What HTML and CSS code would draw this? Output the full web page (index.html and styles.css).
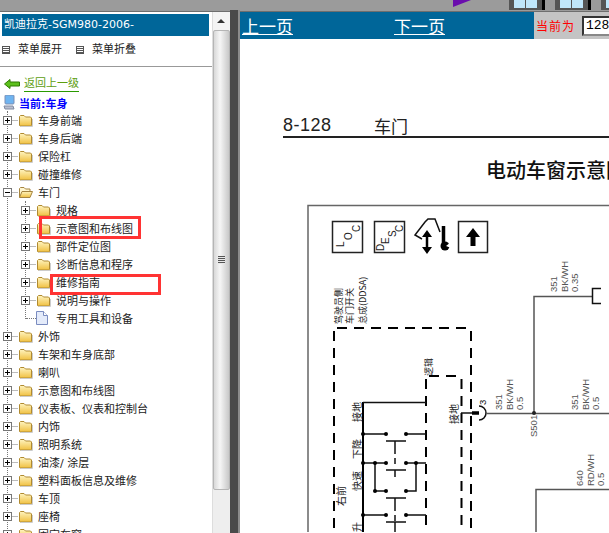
FILE: index.html
```html
<!DOCTYPE html>
<html lang="zh-CN">
<head>
  <meta charset="UTF-8" />
  <title>凯迪拉克-SGM980-2006</title>
  <link rel="stylesheet" href="styles.css">
</head>
<body>

  <!-- shared tree icons -->
  <svg class="defs" width="0" height="0">
    <defs>
      <linearGradient id="folderFill" x1="0" y1="0" x2="0" y2="1">
        <stop offset="0" stop-color="#fff4c0" />
        <stop offset="1" stop-color="#f0c040" />
      </linearGradient>
      <symbol id="plus" viewBox="0 0 15 9">
        <path d="M9.5 4.5H15" stroke="#777" stroke-dasharray="1 1" />
        <rect x=".5" y=".5" width="8" height="8" fill="#fff" stroke="#777" />
        <path d="M2 4.5H7M4.5 2V7" stroke="#000" />
      </symbol>
      <symbol id="minus" viewBox="0 0 15 9">
        <path d="M9.5 4.5H15" stroke="#777" stroke-dasharray="1 1" />
        <rect x=".5" y=".5" width="8" height="8" fill="#fff" stroke="#777" />
        <path d="M2 4.5H7" stroke="#000" />
      </symbol>
      <symbol id="folder" viewBox="0 0 15 13">
        <path d="M1.5 11.5V2.5L2.5 1.5H6L7.5 3H12.5L13.5 4V11.5L13 12H2Z" fill="url(#folderFill)" stroke="#b08a30" />
        <path d="M14.5 5V12.5H2.5" fill="none" stroke="#ccc" />
      </symbol>
      <symbol id="folderOpen" viewBox="0 0 15 13">
        <path d="M1.5 11.5V2.5L2.5 1.5H6L7.5 3H12V5.5" fill="#fff6cf" stroke="#a58440" />
        <path d="M1.5 11.5L4 5.5H14.5L12 11.5Z" fill="url(#folderFill)" stroke="#a58440" />
      </symbol>
    </defs>
  </svg>

  <div class="topbar">
    <svg class="flag" width="18" height="7" viewBox="0 0 18 7"><path d="M0 0H18L0 7Z" fill="#6a0dad" /></svg>
    <div class="tool"><i></i><i></i></div>
    <div class="tool"><i></i><i></i></div>
    <div class="tool"><i></i><i></i></div>
  </div>

  <div class="main">
    <div class="side">
      <div class="side-inner">
        <div class="book-title">凯迪拉克-SGM980-2006-</div>
        <div class="menu-row">
          <span class="menu-item"><span class="menu-icon"></span>菜单展开</span>
          <span class="menu-item"><span class="menu-icon"></span>菜单折叠</span>
        </div>
        <a class="back" href="#">
          <svg width="16" height="10" viewBox="0 0 16 10"><path d="M.5 5L6 .5V3H15.5V7H6V9.5Z" fill="#5cc01c" stroke="#2f7a00" /></svg>
          <span>返回上一级</span>
        </a>
        <div class="current">
          <svg width="12" height="15" viewBox="0 0 12 15">
            <rect x="2" y="0" width="9" height="9" rx="1" fill="#6fb4f0" stroke="#7d8fb5" />
            <path d="M1 11H10L11 14H2Z" fill="#b9bfd0" stroke="#808aa0" />
          </svg>
          <span>当前:车身</span>
        </div>

        <ul class="tree">
          <li class="node"><svg class="box"><use href="#plus" /></svg><svg class="folder"><use href="#folder" /></svg>车身前端</li>
          <li class="node"><svg class="box"><use href="#plus" /></svg><svg class="folder"><use href="#folder" /></svg>车身后端</li>
          <li class="node"><svg class="box"><use href="#plus" /></svg><svg class="folder"><use href="#folder" /></svg>保险杠</li>
          <li class="node"><svg class="box"><use href="#plus" /></svg><svg class="folder"><use href="#folder" /></svg>碰撞维修</li>
          <li class="node"><svg class="box"><use href="#minus" /></svg><svg class="folder"><use href="#folderOpen" /></svg>车门</li>
          <li>
            <ul class="tree sub">
              <li class="node"><svg class="box"><use href="#plus" /></svg><svg class="folder"><use href="#folder" /></svg>规格</li>
              <li class="node"><svg class="box"><use href="#plus" /></svg><svg class="folder"><use href="#folder" /></svg>示意图和布线图</li>
              <li class="node"><svg class="box"><use href="#plus" /></svg><svg class="folder"><use href="#folder" /></svg>部件定位图</li>
              <li class="node"><svg class="box"><use href="#plus" /></svg><svg class="folder"><use href="#folder" /></svg>诊断信息和程序</li>
              <li class="node"><svg class="box"><use href="#plus" /></svg><svg class="folder"><use href="#folder" /></svg>维修指南</li>
              <li class="node"><svg class="box"><use href="#plus" /></svg><svg class="folder"><use href="#folder" /></svg>说明与操作</li>
              <li class="node last">
                <span class="stub"></span>
                <svg class="doc" width="12" height="14" viewBox="0 0 12 14"><path d="M.5.5H7.5L11.5 4.5V13.5H.5Z" fill="#e4ebfa" stroke="#7a8cc0" /><path d="M7.5.5V4.5H11.5" fill="#fff" stroke="#7a8cc0" /></svg>
                专用工具和设备
              </li>
            </ul>
          </li>
          <li class="node"><svg class="box"><use href="#plus" /></svg><svg class="folder"><use href="#folder" /></svg>外饰</li>
          <li class="node"><svg class="box"><use href="#plus" /></svg><svg class="folder"><use href="#folder" /></svg>车架和车身底部</li>
          <li class="node"><svg class="box"><use href="#plus" /></svg><svg class="folder"><use href="#folder" /></svg>喇叭</li>
          <li class="node"><svg class="box"><use href="#plus" /></svg><svg class="folder"><use href="#folder" /></svg>示意图和布线图</li>
          <li class="node"><svg class="box"><use href="#plus" /></svg><svg class="folder"><use href="#folder" /></svg>仪表板、仪表和控制台</li>
          <li class="node"><svg class="box"><use href="#plus" /></svg><svg class="folder"><use href="#folder" /></svg>内饰</li>
          <li class="node"><svg class="box"><use href="#plus" /></svg><svg class="folder"><use href="#folder" /></svg>照明系统</li>
          <li class="node"><svg class="box"><use href="#plus" /></svg><svg class="folder"><use href="#folder" /></svg>油漆/ 涂层</li>
          <li class="node"><svg class="box"><use href="#plus" /></svg><svg class="folder"><use href="#folder" /></svg>塑料面板信息及维修</li>
          <li class="node"><svg class="box"><use href="#plus" /></svg><svg class="folder"><use href="#folder" /></svg>车顶</li>
          <li class="node"><svg class="box"><use href="#plus" /></svg><svg class="folder"><use href="#folder" /></svg>座椅</li>
          <li class="node"><svg class="box"><use href="#plus" /></svg><svg class="folder"><use href="#folder" /></svg>固定车窗</li>
        </ul>

        <!-- red marks drawn over the tree -->
        <div class="mark mark-a"></div>
        <div class="mark mark-b"></div>
      </div>

      <div class="scrollbar">
        <div class="scroll-up"></div>
        <div class="scroll-thumb"><span class="grip"></span></div>
      </div>
    </div>

    <div class="splitter"></div>

    <div class="content">
      <div class="pager">
        <a href="#" class="prev">上一页</a>
        <a href="#" class="next">下一页</a>
        <div class="current-page">
          <span>当前为</span>
          <input type="text" value="128" />
        </div>
      </div>

      <div class="page-head"><span class="page-no">8-128</span><span class="page-name">车门</span></div>
      <div class="page-title">电动车窗示意图</div>

      <svg class="sheet" width="369" height="343" viewBox="240 190 369 343">
        <!-- frame -->
        <path d="M308 533V206.500H609" class="frame" />

        <!-- symbol boxes -->
        <rect x="332.500" y="222.500" width="30" height="31" class="symbol" />
        <rect x="374.500" y="222.500" width="30" height="31" class="symbol" />
        <rect x="458.500" y="222.500" width="29" height="31" class="symbol" />
        <text class="tag" transform="translate(344,248) rotate(-90)">L</text>
        <text class="tag" transform="translate(352,241) rotate(-90)">O</text>
        <text class="tag" transform="translate(360,233) rotate(-90)">C</text>
        <text class="tag" transform="translate(384,252) rotate(-90)">D</text>
        <text class="tag" transform="translate(389,245) rotate(-90)">E</text>
        <text class="tag" transform="translate(396,238) rotate(-90)">S</text>
        <text class="tag" transform="translate(403,233) rotate(-90)">C</text>
        <path d="M422 240L415 236L425 223L428 220H435L440 233" class="wire" />
        <path d="M427 231L422 238H432ZM427 255L422 248H432Z" class="solid" />
        <path d="M427 237V249" stroke="#000" stroke-width="2.500" />
        <path d="M443.500 227V245" stroke="#000" stroke-width="3.500" />
        <circle cx="445" cy="247" r="4.500" class="solid" />
        <path d="M446 247L451 243V249Z" fill="#fff" />
        <path d="M473 229L466 238H470.500V247H475.500V238H480Z" class="solid" />

        <!-- switch assembly labels -->
        <text class="cn" transform="translate(342,325) rotate(-90)">驾驶员侧</text>
        <text class="cn" transform="translate(353,325) rotate(-90)">车门开关</text>
        <text class="cn" transform="translate(366,325) rotate(-90)">总成(DDSA)</text>
        <text class="cn" transform="translate(432,377) rotate(-90)">逻辑</text>
        <text class="cn cn-big" transform="translate(458,425) rotate(-90)">接地</text>
        <text class="cn cn-big" transform="translate(361,423) rotate(-90)">接地</text>
        <text class="cn cn-big" transform="translate(361,460) rotate(-90)">下降</text>
        <text class="cn cn-big" transform="translate(361,492) rotate(-90)">快速</text>
        <text class="cn cn-big" transform="translate(345,507) rotate(-90)">右前</text>
        <text class="cn cn-big" transform="translate(361,533) rotate(-90)">升</text>

        <!-- dashed housings -->
        <path d="M337 329H470M334 332V533M471 332V533" class="dash" />
        <path d="M429 377H462M426 380V533M461.500 380V533" class="dash" />

        <!-- ladder -->
        <path d="M363 403V533" stroke="#000" stroke-width="2" />
        <path d="M363 403.500H426M363 435H386M406 435H426M363 464H386M406 464H426M363 516H386M406 516H426M375 464V492H386M416 464V492H406" class="wire" />
        <path d="M386 442H406M395 442V455M395 459V465M386 471H406M395 471V478M386 499H406M395 499V512M395 516V522M386 523H406M395 523V533" class="wire" />
        <g class="solid">
          <circle cx="363" cy="435" r="2" /><circle cx="386" cy="435" r="2" /><circle cx="406" cy="435" r="2" />
          <circle cx="363" cy="464" r="2" /><circle cx="375" cy="464" r="2" /><circle cx="386" cy="464" r="2" /><circle cx="406" cy="464" r="2" /><circle cx="416" cy="464" r="2" />
          <circle cx="375" cy="492" r="2" /><circle cx="386" cy="492" r="2" /><circle cx="406" cy="492" r="2" />
          <circle cx="363" cy="516" r="2" /><circle cx="386" cy="516" r="2" /><circle cx="406" cy="516" r="2" />
        </g>

        <!-- connector and wires -->
        <path d="M461 414H472" class="wire" />
        <path d="M472 414H479" stroke="#000" stroke-width="3.500" />
        <path d="M479 407A7 7 0 0 1 479 421" class="wire" />
        <path d="M486 414.500H609M534 414V297.500H592" class="line" />
        <path d="M601 289.500H592.500V304.500H601" class="wire" />
        <path d="M536 533V490.500H609" class="line" />
        <circle cx="534" cy="414" r="2" fill="#222" />
        <text class="num num-dark" transform="translate(486,406) rotate(-90)">3</text>

        <text class="num" transform="translate(502,411) rotate(-90)">351</text>
        <text class="num" transform="translate(513,411) rotate(-90)">BK/WH</text>
        <text class="num" transform="translate(523,411) rotate(-90)">0.5</text>
        <text class="num" transform="translate(578,411) rotate(-90)">351</text>
        <text class="num" transform="translate(589,411) rotate(-90)">BK/WH</text>
        <text class="num" transform="translate(599,411) rotate(-90)">0.5</text>
        <text class="num" transform="translate(557,293) rotate(-90)">351</text>
        <text class="num" transform="translate(568,293) rotate(-90)">BK/WH</text>
        <text class="num" transform="translate(578,293) rotate(-90)">0.35</text>
        <text class="num" transform="translate(583,487) rotate(-90)">640</text>
        <text class="num" transform="translate(594,487) rotate(-90)">RD/WH</text>
        <text class="num" transform="translate(604,487) rotate(-90)">0.5</text>
        <text class="num" transform="translate(537,438) rotate(-90)">S501</text>
      </svg>
    </div>
  </div>

</body>
</html>
```

FILE: styles.css
```css
* {
  box-sizing: border-box;
}

html, body {
  margin: 0;
  height: 533px;
  overflow: hidden;
}

body {
  background: #fff;
  font-family: "DejaVu Sans", "Noto Sans CJK SC", sans-serif;
  font-size: 11px;
  color: #222;
}

.defs {
  position: absolute;
}

/* top toolbar strip */
.topbar {
  height: 12px;
  background: #9b9b9b;
  border-bottom: 1px solid #6e6e6e;
  display: flex;
  align-items: flex-start;
  padding-left: 453px;
}

.flag {
  flex: none;
  margin-right: 38px;
}

.tool {
  width: 36px;
  height: 10px;
  flex: none;
  padding: 0 5px 2px 5px;
  background: #555;
  border-right: 3px solid #000;
  display: flex;
  gap: 1px;
}

.tool i {
  flex: 1;
  background: #bfe6fa;
}

.tool + .tool {
  margin-left: 10px;
}

.main {
  display: flex;
  height: 521px;
}

/* left menu */
.side {
  width: 230px;
  display: flex;
  flex: none;
  overflow: hidden;
}

.side-inner {
  width: 212px;
  position: relative;
  padding-top: 2px;
}

.book-title {
  margin-left: 2px;
  width: 207px;
  height: 22px;
  line-height: 21px;
  padding-left: 2px;
  background: #006699;
  color: #fff;
  white-space: nowrap;
}

.menu-row {
  height: 31px;
  padding: 5px 0 0 2px;
  border-bottom: 1px solid #999;
  display: flex;
  gap: 14px;
  line-height: 16px;
}

.menu-item {
  display: flex;
  align-items: center;
  height: 16px;
  margin-top: 1px;
}

.menu-item .menu-icon {
  width: 8px;
  height: 8px;
  margin-right: 8px;
  border: 1px solid #555;
  background: repeating-linear-gradient(#fff 0 1px, #555 1px 2px);
}

.back {
  margin: 9px 0 0 4px;
  height: 16px;
  display: flex;
  align-items: center;
  gap: 4px;
  color: #5d9e10;
  text-decoration: none;
}

.back span {
  border-bottom: 1px solid #2a9a00;
  line-height: 14px;
}

.current {
  height: 15px;
  margin: 3px 0 0 3px;
  display: flex;
  align-items: center;
  gap: 4px;
  color: #0000ff;
  font-weight: bold;
}

.tree {
  list-style: none;
  margin: 1px 0 0 7px;
  padding: 0;
  border-left: 1px dotted #777;
}

.tree.sub {
  margin: 0 0 0 17px;
}

.node {
  height: 18px;
  margin-left: -5px;
  display: flex;
  align-items: center;
  white-space: nowrap;
  position: relative;
}

.box {
  width: 15px;
  height: 9px;
  flex: none;
}

.folder {
  width: 15px;
  height: 13px;
  margin-right: 5px;
  flex: none;
}

.stub {
  width: 10px;
  margin-left: 5px;
  border-top: 1px dotted #777;
}

.doc {
  margin-right: 8px;
}

.last::after {
  content: "";
  position: absolute;
  left: 4px;
  top: 10px;
  width: 1px;
  height: 8px;
  background: #fff;
}

.mark {
  position: absolute;
  border: 3px solid #ff3333;
}

.mark-a {
  left: 39px;
  top: 204px;
  width: 102px;
  height: 23px;
}

.mark-b {
  left: 50px;
  top: 262px;
  width: 111px;
  height: 21px;
}

/* scrollbar */
.scrollbar {
  width: 18px;
  background: #eeeeee;
  flex: none;
  border-left: 1px solid #ddd;
}

.scroll-up {
  height: 18px;
  position: relative;
  background: #f4f4f4;
}

.scroll-up::after {
  content: "";
  position: absolute;
  left: 4px;
  top: 7px;
  border: 4px solid transparent;
  border-top: 0;
  border-bottom: 4px solid #333;
}

.scroll-thumb {
  height: 460px;
  border: 1px solid #b5b5b5;
  border-radius: 2px;
  background: linear-gradient(90deg, #d8d8d8, #f6f6f6 40%, #c8c8c8);
  display: flex;
  align-items: center;
  justify-content: center;
}

.grip {
  width: 7px;
  height: 8px;
  background: repeating-linear-gradient(#555 0 1px, #e8e8e8 1px 2px);
}

.splitter {
  width: 10px;
  flex: none;
  background: #4a4a4a;
  border-right: 2px solid #8c8c8c;
  margin-top: -2px;
}

/* right page */
.content {
  flex: 1;
  min-width: 0;
  overflow: hidden;
}

.pager {
  height: 27px;
  background: #006699;
  display: flex;
  align-items: center;
  padding-left: 2px;
  white-space: nowrap;
}

.pager a {
  color: #fff;
  font-family: "Noto Sans CJK SC", sans-serif;
  font-size: 17px;
  line-height: 20px;
}

.next {
  margin-left: 101px;
}

.current-page {
  width: 75px;
  height: 27px;
  margin-left: auto;
  background: #c4c4c4;
  display: flex;
  align-items: center;
  padding-left: 2px;
  color: #ff0000;
  font-family: "Noto Sans CJK SC", sans-serif;
  font-size: 12px;
  letter-spacing: 1px;
}

.current-page input {
  width: 40px;
  height: 20px;
  margin-left: 7px;
  padding: 0 2px;
  flex: none;
  border: 2px inset #888;
  font-family: "Liberation Mono", monospace;
  font-size: 13px;
  color: #000;
}

.page-head {
  margin: 73px 0 0 43px;
  height: 26px;
  padding-top: 3px;
  border-bottom: 2px solid #222;
  display: flex;
  align-items: center;
  color: #222;
}

.page-no {
  width: 92px;
  font-family: "Liberation Sans", sans-serif;
  font-size: 18px;
  letter-spacing: .5px;
}

.page-name {
  margin-left: -1px;
  font-family: "Noto Sans CJK SC", sans-serif;
  font-size: 17px;
}

.page-title {
  height: 51px;
  padding: 20px 0 0 246px;
  font-family: "Noto Sans CJK SC", sans-serif;
  font-size: 20px;
  font-weight: 500;
  line-height: 24px;
  color: #111;
  white-space: nowrap;
}

.sheet {
  display: block;
}

.frame {
  fill: none;
  stroke: #666;
  stroke-width: 1.5;
}

.symbol {
  fill: #fff;
  stroke: #222;
  stroke-width: 1.500;
}

.wire {
  fill: none;
  stroke: #111;
  stroke-width: 1.500;
}

.line {
  fill: none;
  stroke: #555;
  stroke-width: 1.500;
}

.solid {
  fill: #000;
}

.dash {
  fill: none;
  stroke: #000;
  stroke-width: 2;
  stroke-dasharray: 10 7;
}

.tag {
  font-family: "Liberation Sans", sans-serif;
  font-size: 10px;
  fill: #222;
}

.cn {
  font-family: "Noto Sans CJK SC", sans-serif;
  font-size: 9px;
  fill: #222;
}

.cn-big {
  font-size: 10px;
}

.num {
  font-family: "Liberation Sans", sans-serif;
  font-size: 9.500px;
  fill: #555;
}

.num-dark {
  fill: #111;
}
```
